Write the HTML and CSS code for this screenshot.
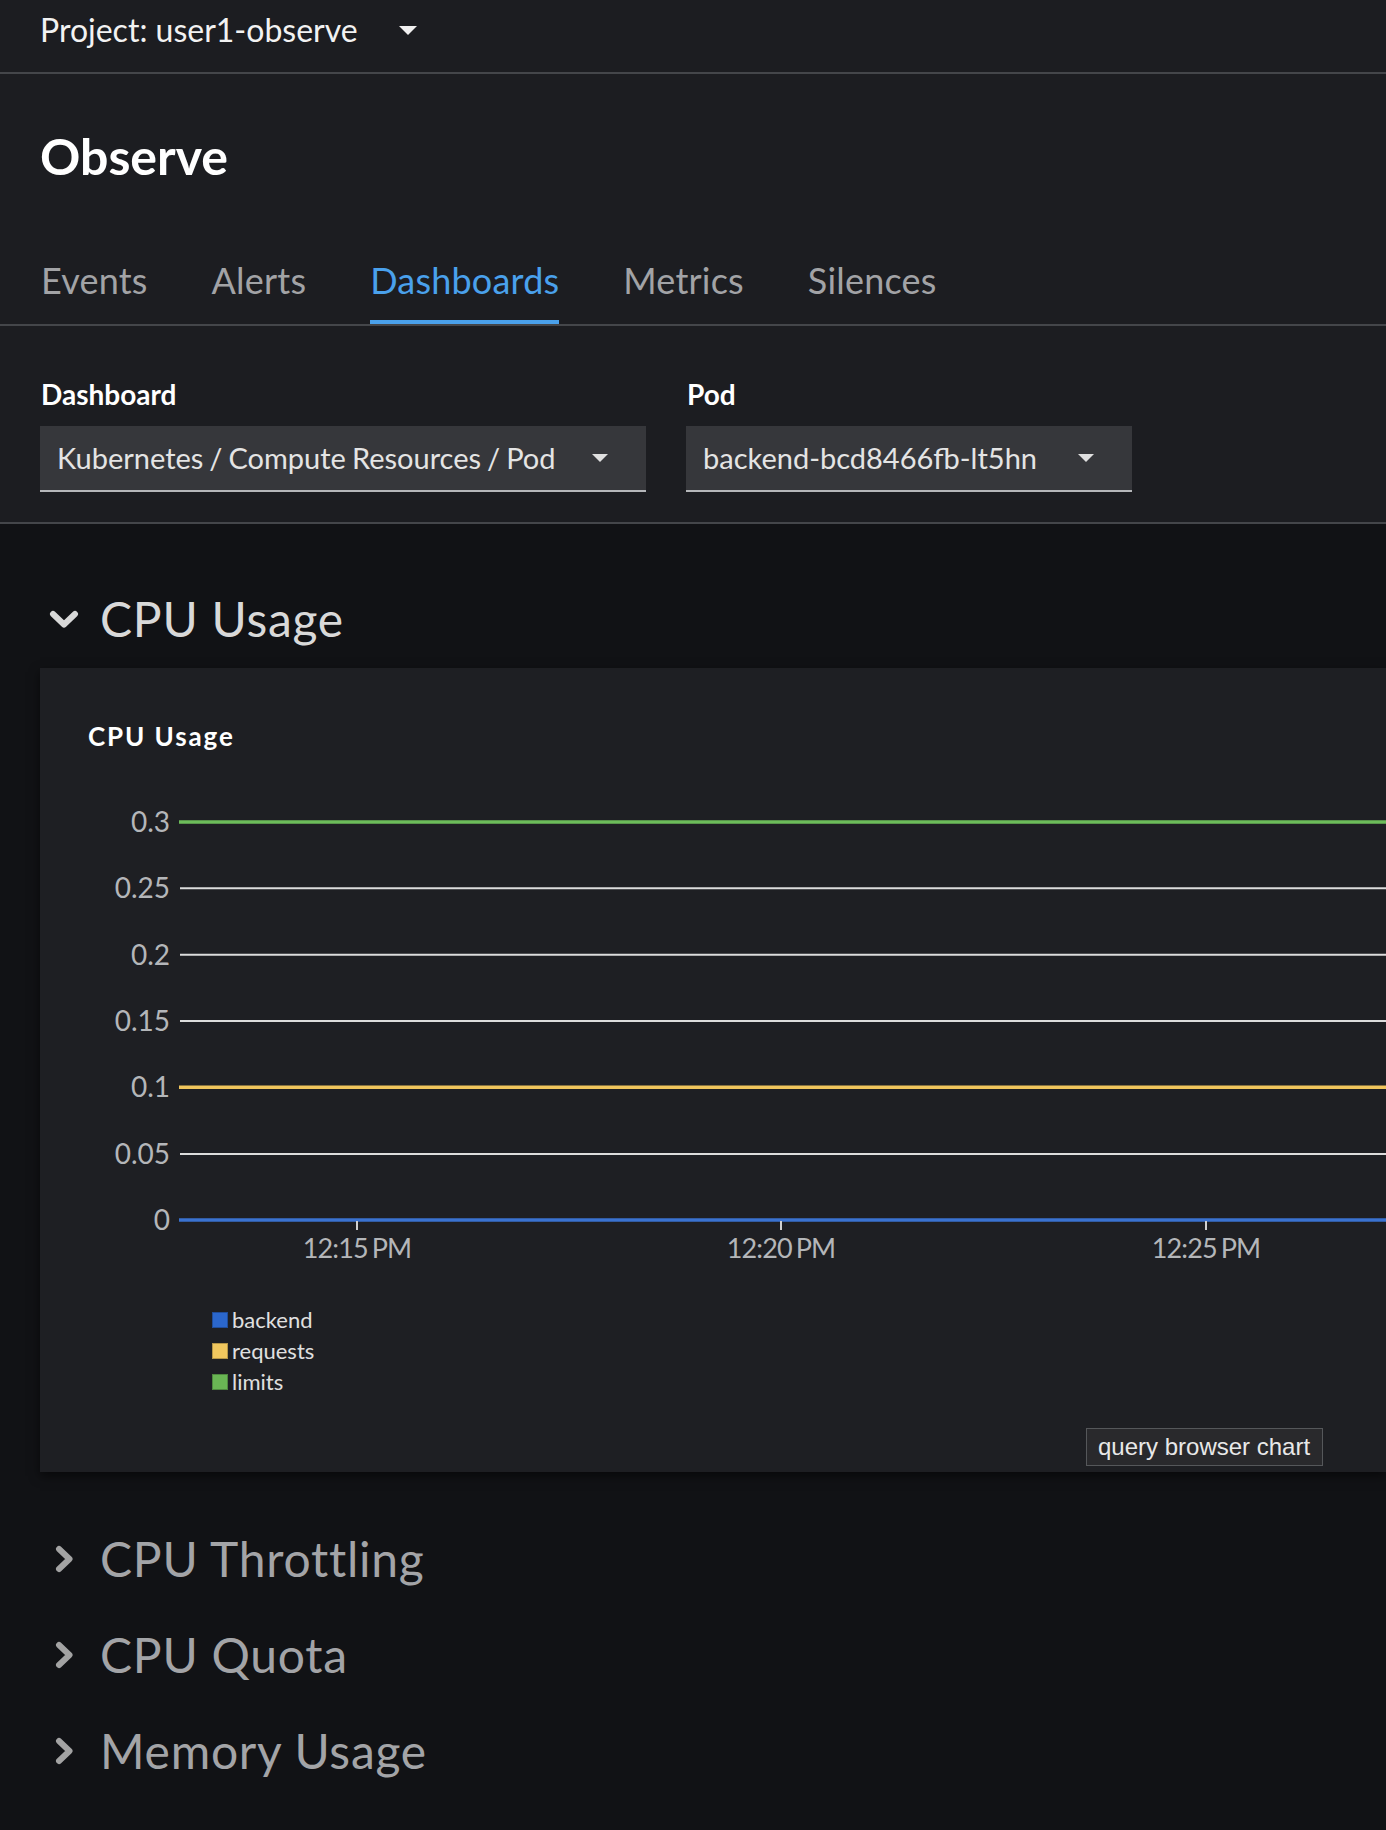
FILE: index.html
```html
<!DOCTYPE html>
<html lang="en">
<head>
<meta charset="utf-8">
<title>Observe · Dashboards</title>
<link rel="stylesheet" href="styles.css">
</head>
<body>
  <header class="project-bar">
    <button class="project-toggle">
      <span class="project-text">Project: user1-observe</span>
      <svg class="caret caret-lg" width="18" height="9" viewBox="0 0 18 9"><path d="M0 0H18L9 9Z" fill="#f0f0f0"/></svg>
    </button>
  </header>

  <section class="page-head">
    <h1 class="page-title">Observe</h1>
    <nav class="tabs">
      <a class="tab">Events</a>
      <a class="tab">Alerts</a>
      <a class="tab active">Dashboards</a>
      <a class="tab">Metrics</a>
      <a class="tab">Silences</a>
    </nav>
  </section>

  <section class="filters">
    <div class="field">
      <label class="field-label">Dashboard</label>
      <div class="select select-dashboard">
        <span class="select-text">Kubernetes / Compute Resources / Pod</span>
        <svg class="caret" width="16" height="10" viewBox="0 0 16 10"><path d="M0 1H16L8 9Z" fill="#e0e0e0"/></svg>
      </div>
    </div>
    <div class="field">
      <label class="field-label">Pod</label>
      <div class="select select-pod">
        <span class="select-text">backend-bcd8466fb-lt5hn</span>
        <svg class="caret" width="16" height="10" viewBox="0 0 16 10"><path d="M0 1H16L8 9Z" fill="#e0e0e0"/></svg>
      </div>
    </div>
  </section>

  <main class="content">
    <div class="group expanded">
      <button class="group-toggle">
        <span class="chev-slot">
          <svg width="30" height="19" viewBox="0 0 30 19"><polyline points="4,4 15,14.5 26,4" fill="none" stroke="#d8d8d8" stroke-width="6" stroke-linecap="round" stroke-linejoin="round"/></svg>
        </span>
        <span class="group-title">CPU Usage</span>
      </button>

      <div class="card">
        <h3 class="card-title">CPU Usage</h3>
        <svg class="chart" width="1346" height="520">
          <g class="grid">
            <line x1="140" x2="1346" y1="136.3" y2="136.3"/>
            <line x1="140" x2="1346" y1="202.7" y2="202.7"/>
            <line x1="140" x2="1346" y1="269" y2="269"/>
            <line x1="140" x2="1346" y1="402" y2="402"/>
          </g>
          <line x1="139" x2="1346" y1="70" y2="70" stroke="#6cbc5a" stroke-width="3.5"/>
          <line x1="139" x2="1346" y1="335.3" y2="335.3" stroke="#f0c55c" stroke-width="3.5"/>
          <line x1="139" x2="1346" y1="468" y2="468" stroke="#3a72d0" stroke-width="3.5"/>
          <g class="ticks">
            <line x1="317" x2="317" y1="469" y2="478"/>
            <line x1="741" x2="741" y1="469" y2="478"/>
            <line x1="1166" x2="1166" y1="469" y2="478"/>
          </g>
          <g class="ylabels">
            <text x="130" y="80">0.3</text>
            <text x="130" y="146.3">0.25</text>
            <text x="130" y="212.7">0.2</text>
            <text x="130" y="279">0.15</text>
            <text x="130" y="345.3">0.1</text>
            <text x="130" y="412">0.05</text>
            <text x="130" y="478">0</text>
          </g>
          <g class="xlabels">
            <text x="317" y="506">12:15 PM</text>
            <text x="741" y="506">12:20 PM</text>
            <text x="1166" y="506">12:25 PM</text>
          </g>
        </svg>
        <ul class="legend">
          <li><span class="swatch sw-blue"></span>backend</li>
          <li><span class="swatch sw-yellow"></span>requests</li>
          <li><span class="swatch sw-green"></span>limits</li>
        </ul>
        <div class="badge-row">
          <span class="badge">query browser chart</span>
        </div>
      </div>
    </div>

    <div class="group">
      <button class="group-toggle">
        <span class="chev-slot">
          <svg width="19" height="28" viewBox="0 0 19 28"><polyline points="4,4 14.5,14 4,24" fill="none" stroke="#a3a3a3" stroke-width="6" stroke-linecap="round" stroke-linejoin="round"/></svg>
        </span>
        <span class="group-title">CPU Throttling</span>
      </button>
    </div>
    <div class="group">
      <button class="group-toggle">
        <span class="chev-slot">
          <svg width="19" height="28" viewBox="0 0 19 28"><polyline points="4,4 14.5,14 4,24" fill="none" stroke="#a3a3a3" stroke-width="6" stroke-linecap="round" stroke-linejoin="round"/></svg>
        </span>
        <span class="group-title">CPU Quota</span>
      </button>
    </div>
    <div class="group">
      <button class="group-toggle">
        <span class="chev-slot">
          <svg width="19" height="28" viewBox="0 0 19 28"><polyline points="4,4 14.5,14 4,24" fill="none" stroke="#a3a3a3" stroke-width="6" stroke-linecap="round" stroke-linejoin="round"/></svg>
        </span>
        <span class="group-title">Memory Usage</span>
      </button>
    </div>
  </main>
</body>
</html>
```
FILE: styles.css
```css
* { box-sizing: border-box; }

html, body {
  margin: 0;
  padding: 0;
}

body {
  width: 1386px;
  min-height: 1830px;
  overflow: hidden;
  background: #111215;
  font-family: "Lato", "Noto Sans", sans-serif;
  color: #e6e6e6;
}

button {
  font: inherit;
  color: inherit;
  background: none;
  border: 0;
  padding: 0;
  margin: 0;
  cursor: pointer;
  text-align: left;
}

/* ---------- project bar ---------- */
.project-bar {
  background: #1c1d21;
  height: 74px;
  padding: 10px 0 0 40px;
  border-bottom: 2px solid #44464a;
}

.project-toggle {
  display: flex;
  align-items: center;
  gap: 41px;
  height: 40px;
}

.project-text {
  font-size: 32px;
  line-height: 40px;
  color: #f2f2f2;
}

.caret { display: block; flex: none; }

/* ---------- page head ---------- */
.page-head {
  background: #1c1d21;
  padding: 52px 0 0 0;
  border-bottom: 2px solid #44464a;
}

.page-title {
  margin: 0 0 0 40px;
  font-size: 50px;
  line-height: 60px;
  font-weight: 700;
  color: #ffffff;
}

.tabs {
  display: flex;
  gap: 64px;
  margin-top: 72px;
  padding-left: 41px;
}

.tab {
  display: block;
  font-size: 36px;
  line-height: 44px;
  letter-spacing: 0.2px;
  padding-bottom: 18px;
  border-bottom: 4px solid transparent;
  color: #a2a3a6;
}

.tab.active {
  color: #4aa1ec;
  border-bottom-color: #4aa1ec;
}

/* ---------- filters ---------- */
.filters {
  background: #1c1d21;
  display: flex;
  gap: 40px;
  padding: 51px 0 30px 40px;
  border-bottom: 2px solid #44464a;
}

.field-label {
  display: block;
  font-size: 28px;
  line-height: 34px;
  font-weight: 700;
  color: #ffffff;
  padding-left: 1px;
  margin-bottom: 15px;
}

.select {
  display: flex;
  align-items: center;
  justify-content: space-between;
  height: 66px;
  padding: 0 38px 0 17px;
  background: #36373b;
  border-bottom: 2px solid #b5b7ba;
}

.select-dashboard { width: 606px; }
.select-pod { width: 446px; }

.select-text {
  font-size: 29px;
  line-height: 64px;
  color: #e4e4e4;
  white-space: nowrap;
  word-spacing: -1.4px;
}

/* ---------- content ---------- */
.content {
  padding: 67px 0 0 0;
}

.group + .group { margin-top: 40px; }
.group.expanded + .group { margin-top: 59px; }

.group-toggle {
  display: flex;
  align-items: center;
  gap: 12px;
  padding-left: 40px;
  height: 56px;
}

.chev-slot {
  width: 48px;
  display: flex;
  justify-content: center;
  align-items: center;
}

.chev-slot svg { display: block; }

.group-title {
  font-size: 48px;
  line-height: 56px;
  color: #a3a4a7;
  letter-spacing: 0.75px;
}

.expanded .group-title { color: #d9d9d9; }

/* ---------- card ---------- */
.card {
  margin: 21px 0 0 40px;
  width: 1346px;
  background: #1e1f23;
  padding: 53px 0 6px 0;
  box-shadow: 0 4px 10px rgba(0, 0, 0, 0.55);
}

.card-title {
  margin: 0 0 0 48px;
  font-size: 26px;
  line-height: 31px;
  font-weight: 700;
  letter-spacing: 1.9px;
  color: #ffffff;
}

.chart {
  display: block;
  overflow: visible;
}

.grid line {
  stroke: #dcdcdc;
  stroke-width: 2;
}

.ticks line {
  stroke: #d0d0d0;
  stroke-width: 2;
}

.ylabels text {
  font-family: "Lato", "Noto Sans", sans-serif;
  font-size: 28px;
  fill: #b4b6b9;
  text-anchor: end;
}

.xlabels text {
  font-family: "Lato", "Noto Sans", sans-serif;
  font-size: 27px;
  letter-spacing: -0.9px;
  word-spacing: -2px;
  fill: #b4b6b9;
  text-anchor: middle;
}

.legend {
  list-style: none;
  margin: 32px 0 0 0;
  padding: 0 0 0 172px;
}

.legend li {
  display: flex;
  align-items: center;
  gap: 4px;
  font-size: 22px;
  line-height: 31px;
  color: #e0e0e0;
}

.swatch {
  width: 16px;
  height: 16px;
  flex: none;
  border: 1px solid rgba(0, 0, 0, 0.25);
}

.sw-blue { background: #2b67cc; }
.sw-yellow { background: #f0c75e; }
.sw-green { background: #6ab654; }

.badge-row {
  display: flex;
  justify-content: flex-end;
  padding-right: 63px;
  margin-top: 31px;
}

.badge {
  display: block;
  width: 237px;
  height: 38px;
  padding-left: 11px;
  font-family: "Liberation Sans", Arial, sans-serif;
  font-size: 24px;
  line-height: 36px;
  color: #e8e8e8;
  background: #29292c;
  border: 1px solid #55575a;
  white-space: nowrap;
}
```
